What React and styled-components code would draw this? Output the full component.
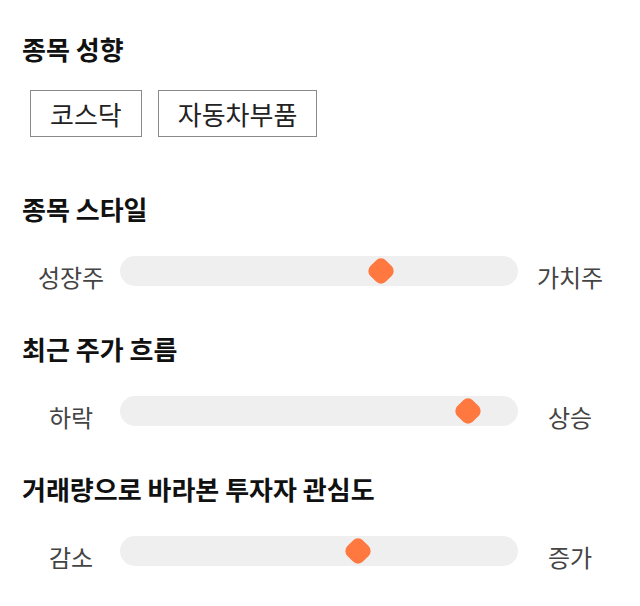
import React from "react";
import styled, { createGlobalStyle } from "styled-components";

const GlobalStyle = createGlobalStyle`
  body {
    margin: 0;
    background: #fff;
    font-family: "Noto Sans CJK KR", "Noto Sans", sans-serif;
  }
`;

const Page = styled.div`
  padding: 34px 0 0 22px;
  width: 640px;
  box-sizing: border-box;
`;

const Section = styled.section`
  margin-bottom: ${(p) => p.$gap || 0}px;
`;

const Heading = styled.h2`
  margin: 0;
  font-size: 26px;
  line-height: 30px;
  font-weight: 700;
  color: #111;
`;

const TagRow = styled.div`
  display: flex;
  gap: 16px;
  margin: 26px 0 0 8px;
`;

const Tag = styled.button`
  height: 47px;
  padding: 0 19px;
  border: 1px solid #8a8a8a;
  background: #fff;
  font-family: inherit;
  font-size: 26px;
  color: #222;
  cursor: pointer;
`;

const SliderRow = styled.div`
  display: flex;
  align-items: center;
  margin-top: 32px;
  height: 30px;
`;

const Label = styled.span`
  width: ${(p) => p.$width}px;
  flex: none;
  text-align: center;
  font-size: 24px;
  line-height: 30px;
  color: #444;
  margin-top: 12px;
`;

const Track = styled.div`
  position: relative;
  width: 398px;
  height: 30px;
  border-radius: 15px;
  background: #efefef;
`;

const Thumb = styled.div`
  position: absolute;
  top: 50%;
  width: 22px;
  height: 22px;
  border-radius: 7px;
  background: #ff7840;
  transform: translate(-50%, -50%) rotate(45deg);
`;

const sliders = [
  { title: "종목 스타일", left: "성장주", right: "가치주", value: 65.6 },
  { title: "최근 주가 흐름", left: "하락", right: "상승", value: 87.4 },
  { title: "거래량으로 바라본 투자자 관심도", left: "감소", right: "증가", value: 59.8 },
];

export default function App() {
  return (
    <Page>
      <GlobalStyle />
      <Section $gap={57}>
        <Heading>종목 성향</Heading>
        <TagRow>
          <Tag>코스닥</Tag>
          <Tag>자동차부품</Tag>
        </TagRow>
      </Section>
      {sliders.map((s) => (
        <Section key={s.title} $gap={48}>
          <Heading>{s.title}</Heading>
          <SliderRow>
            <Label $width={98}>{s.left}</Label>
            <Track>
              <Thumb style={{ left: `${s.value}%` }} />
            </Track>
            <Label $width={104}>{s.right}</Label>
          </SliderRow>
        </Section>
      ))}
    </Page>
  );
}
